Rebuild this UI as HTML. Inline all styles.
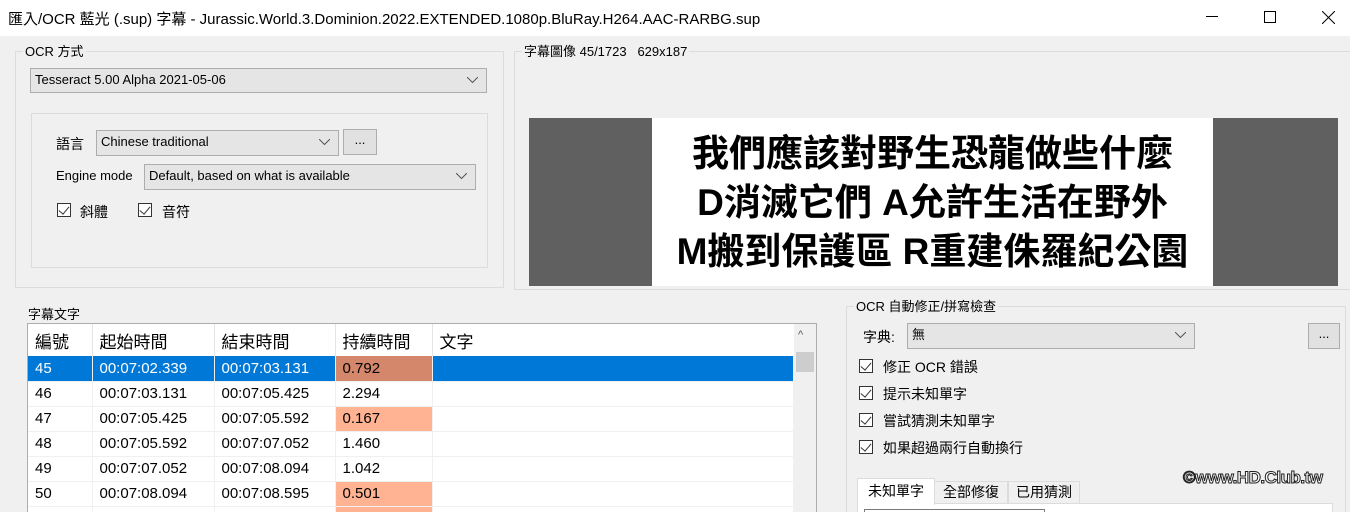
<!DOCTYPE html><html style="width:1350px;height:512px;overflow:hidden"><head><meta charset="utf-8"><style>
*{box-sizing:border-box;margin:0;padding:0}
body{width:1350px;height:512px;overflow:hidden;background:#f0f0f0;position:relative;font-family:"Liberation Sans","Noto Sans CJK TC",sans-serif;font-size:13px;color:#000}
.a{position:absolute;white-space:nowrap}
.gb{position:absolute;border:1px solid #dcdcdc}
.lg{position:absolute;background:#f0f0f0;padding:0 2px;font-size:13px;line-height:15px}
.cb{position:absolute;background:#e5e5e5;border:1px solid #adadad;line-height:22px;padding-left:4px}
.cb svg{position:absolute;right:8px;top:8px}
.btn{position:absolute;background:#e1e1e1;border:1px solid #adadad;text-align:center;line-height:20px}
.chk{position:absolute;width:14px;height:14px;border:1px solid #333;background:#fff}
.chk:after{content:"";position:absolute;left:3px;top:0px;width:5px;height:9px;border:solid #333;border-width:0 1.5px 1.5px 0;transform:rotate(40deg)}
table{border-collapse:collapse;font-size:15px}
td{height:25px;border-right:1px solid #f0f0f0;border-bottom:1px solid #f0f0f0;padding-left:7px;font-family:"Liberation Sans Narrow","Liberation Sans",sans-serif}
</style></head><body>
<div class="a" style="left:0;top:0;width:1350px;height:36px;background:#fff"></div>
<div class="a" style="left:8px;top:8px;font-size:15px">匯入/OCR 藍光 (.sup) 字幕 - Jurassic.World.3.Dominion.2022.EXTENDED.1080p.BluRay.H264.AAC-RARBG.sup</div>
<div class="a" style="left:1206px;top:16px;width:12px;height:1px;background:#000"></div>
<div class="a" style="left:1264px;top:11px;width:12px;height:12px;border:1px solid #000"></div>
<svg class="a" style="left:1322px;top:11px" width="13" height="13"><path d="M0 0L13 13M13 0L0 13" stroke="#000"/></svg>

<div class="gb" style="left:15px;top:51px;width:489px;height:237px"></div>
<div class="lg" style="left:23px;top:44px">OCR 方式</div>
<div class="cb" style="left:30px;top:68px;width:457px;height:25px">Tesseract 5.00 Alpha 2021-05-06<svg width="11" height="7"><path d="M0 0L5.5 5.5L11 0" fill="none" stroke="#555"/></svg></div>
<div class="gb" style="left:31px;top:113px;width:457px;height:155px"></div>
<div class="a" style="left:56px;top:134px;font-size:14px">語言</div>
<div class="cb" style="left:96px;top:130px;width:243px;height:26px">Chinese traditional<svg width="11" height="7"><path d="M0 0L5.5 5.5L11 0" fill="none" stroke="#555"/></svg></div>
<div class="btn" style="left:343px;top:129px;width:34px;height:26px">...</div>
<div class="a" style="left:56px;top:168px">Engine mode</div>
<div class="cb" style="left:144px;top:164px;width:332px;height:26px">Default, based on what is available<svg width="11" height="7"><path d="M0 0L5.5 5.5L11 0" fill="none" stroke="#555"/></svg></div>
<div class="chk" style="left:57px;top:203px"></div><div class="a" style="left:80px;top:202px;font-size:14px">斜體</div>
<div class="chk" style="left:138px;top:203px"></div><div class="a" style="left:162px;top:202px;font-size:14px">音符</div>

<div class="gb" style="left:514px;top:51px;width:840px;height:239px"></div>
<div class="lg" style="left:522px;top:44px">字幕圖像 45/1723&nbsp;&nbsp; 629x187</div>
<div class="a" style="left:529px;top:118px;width:809px;height:168px;background:#606060"></div>
<div class="a" style="left:652px;top:118px;width:561px;height:168px;background:#fff;font-weight:bold;font-size:37px;line-height:49px;text-align:center;padding-top:11px;font-family:'Liberation Sans','Noto Sans CJK TC',sans-serif">我們應該對野生恐龍做些什麼<br>D消滅它們 A允許生活在野外<br>M搬到保護區 R重建侏羅紀公園</div>

<div class="a" style="left:28px;top:304px">字幕文字</div>
<div class="a" style="left:27px;top:323px;width:790px;height:200px;border:1px solid #adadad;background:#fff;overflow:hidden">
<table style="position:absolute;left:0;top:0;width:766px">
<tr style="height:32px"><td style="width:64px;border:0;border-right:1px solid #e5e5e5;font-size:17px;font-family:'Liberation Sans','Noto Sans CJK TC',sans-serif;height:32px">編號</td><td style="width:122px;border:0;border-right:1px solid #e5e5e5;font-size:17px;font-family:'Liberation Sans','Noto Sans CJK TC',sans-serif">起始時間</td><td style="width:121px;border:0;border-right:1px solid #e5e5e5;font-size:17px;font-family:'Liberation Sans','Noto Sans CJK TC',sans-serif">結束時間</td><td style="width:97px;border:0;border-right:1px solid #e5e5e5;font-size:17px;font-family:'Liberation Sans','Noto Sans CJK TC',sans-serif">持續時間</td><td style="border:0;font-size:17px;font-family:'Liberation Sans','Noto Sans CJK TC',sans-serif">文字</td></tr>
<tr style="background:#0078d7;color:#fff"><td>45</td><td>00:07:02.339</td><td>00:07:03.131</td><td style="background:#d4876b;color:#000">0.792</td><td></td></tr>
<tr><td>46</td><td>00:07:03.131</td><td>00:07:05.425</td><td>2.294</td><td></td></tr>
<tr><td>47</td><td>00:07:05.425</td><td>00:07:05.592</td><td style="background:#ffb392">0.167</td><td></td></tr>
<tr><td>48</td><td>00:07:05.592</td><td>00:07:07.052</td><td>1.460</td><td></td></tr>
<tr><td>49</td><td>00:07:07.052</td><td>00:07:08.094</td><td>1.042</td><td></td></tr>
<tr><td>50</td><td>00:07:08.094</td><td>00:07:08.595</td><td style="background:#ffb392">0.501</td><td></td></tr>
<tr><td></td><td></td><td></td><td style="background:#ffb392"></td><td></td></tr>
</table>
<div class="a" style="left:766px;top:0;width:22px;height:200px;background:#f0f0f0"></div>
<div class="a" style="left:770px;top:5px;font-size:11px;color:#555">^</div>
<div class="a" style="left:768px;top:28px;width:18px;height:20px;background:#cdcdcd"></div>
</div>

<div class="gb" style="left:846px;top:306px;width:500px;height:220px"></div>
<div class="lg" style="left:854px;top:299px">OCR 自動修正/拼寫檢查</div>
<div class="a" style="left:863px;top:327px;font-size:14px">字典:</div>
<div class="cb" style="left:907px;top:323px;width:288px;height:26px">無<svg width="11" height="7"><path d="M0 0L5.5 5.5L11 0" fill="none" stroke="#555"/></svg></div>
<div class="btn" style="left:1308px;top:323px;width:32px;height:26px">...</div>
<div class="chk" style="left:859px;top:359px"></div><div class="a" style="left:883px;top:357px;font-size:14px">修正 OCR 錯誤</div>
<div class="chk" style="left:859px;top:386px"></div><div class="a" style="left:883px;top:384px;font-size:14px">提示未知單字</div>
<div class="chk" style="left:859px;top:413px"></div><div class="a" style="left:883px;top:411px;font-size:14px">嘗試猜測未知單字</div>
<div class="chk" style="left:859px;top:440px"></div><div class="a" style="left:883px;top:438px;font-size:14px">如果超過兩行自動換行</div>
<div class="a" style="left:857px;top:503px;width:476px;height:20px;background:#fff;border:1px solid #dcdcdc"></div>
<div class="a" style="left:934px;top:481px;width:74px;height:23px;border:1px solid #dcdcdc;text-align:center;line-height:21px;font-size:14px">全部修復</div>
<div class="a" style="left:1008px;top:481px;width:72px;height:23px;border:1px solid #dcdcdc;text-align:center;line-height:21px;font-size:14px">已用猜測</div>
<div class="a" style="left:857px;top:478px;width:78px;height:27px;background:#fff;border:1px solid #dcdcdc;border-bottom:0;text-align:center;line-height:24px;font-size:14px">未知單字</div>
<div class="a" style="left:864px;top:509px;width:181px;height:5px;border:1px solid #7a7a7a"></div>
<div class="a" style="left:1183px;top:468px;font-size:17px;font-weight:bold;color:#fff;-webkit-text-stroke:1px #222;letter-spacing:-0.5px">©www.HD.Club.tw</div>
</body></html>
